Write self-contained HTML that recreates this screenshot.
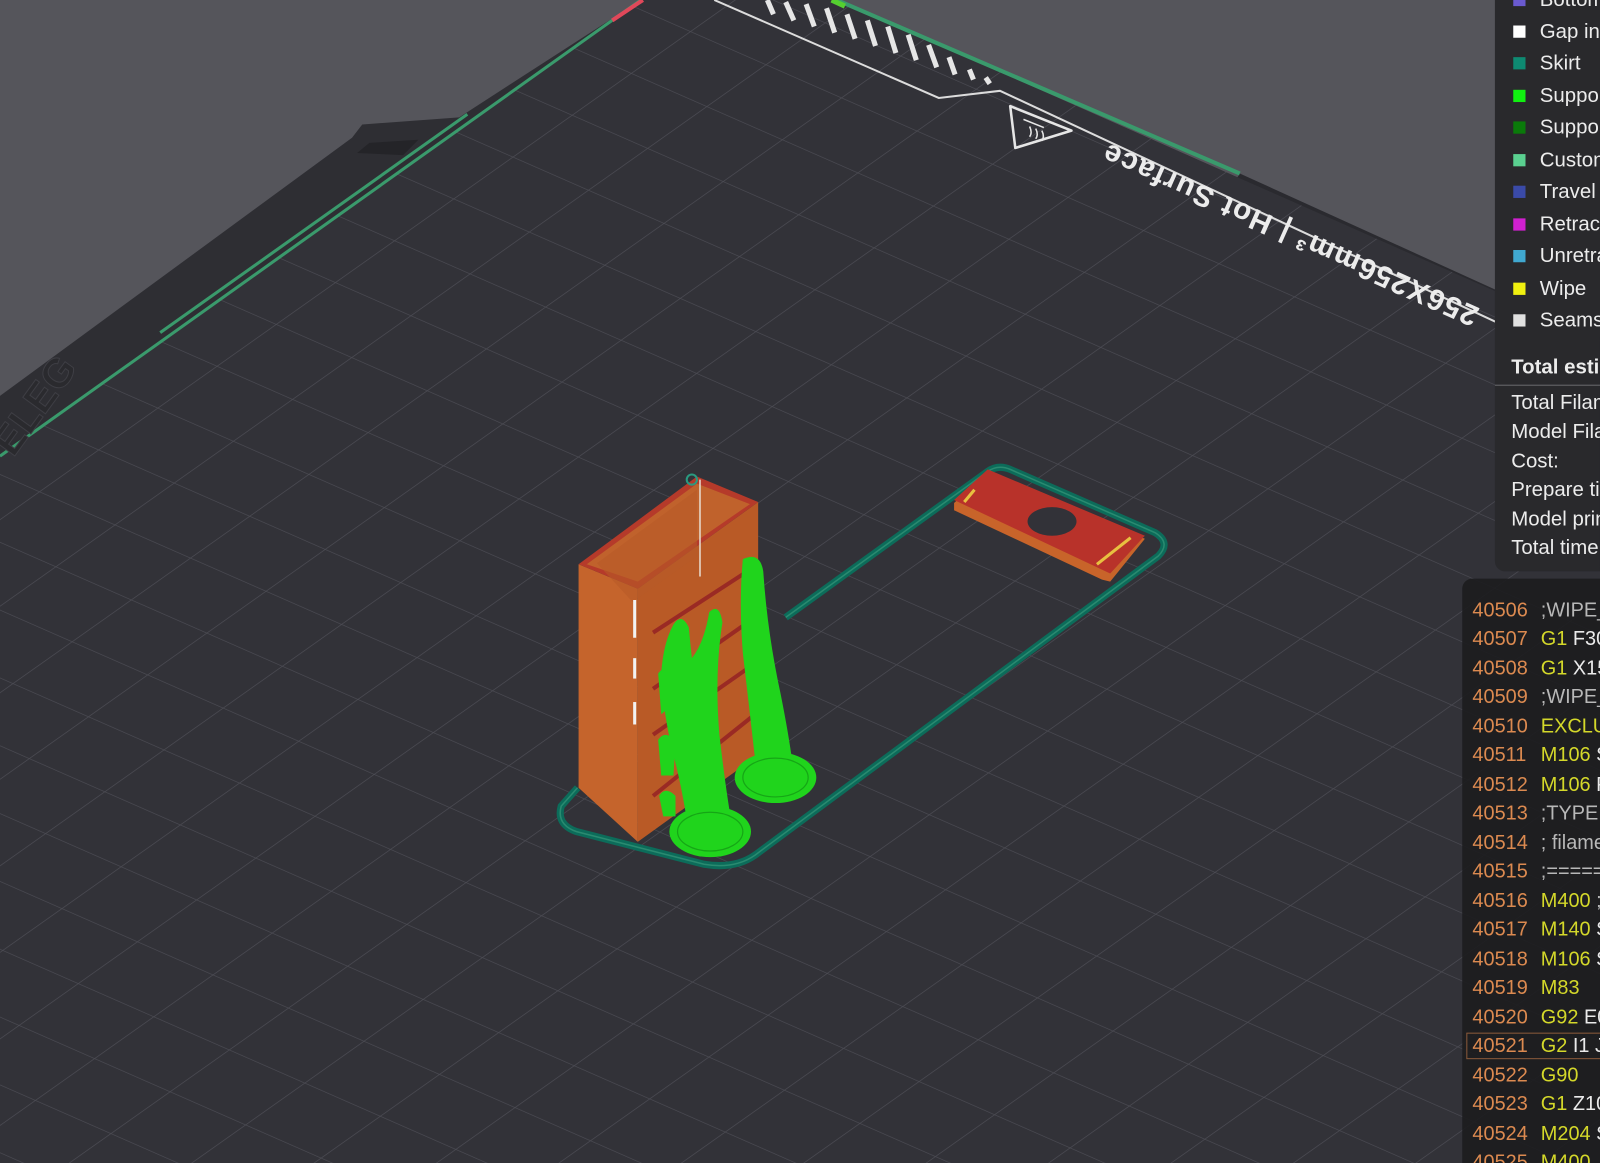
<!DOCTYPE html>
<html><head><meta charset="utf-8"><style>
html,body{margin:0;padding:0;width:1600px;height:1163px;overflow:hidden;background:#323238;font-family:"Liberation Sans",sans-serif}
#w{position:absolute;left:0;top:0;width:1568px;height:1140px;transform:scale(1.0204);transform-origin:0 0;background:#55555b;overflow:hidden}
svg{position:absolute;left:0;top:0}
.leg{position:absolute;left:1465px;top:-20px;width:150px;height:580px;background:#29292c;border-radius:0 0 0 10px;color:#ececec;font-size:20px}
.it{position:absolute;left:18px;height:24px;line-height:24px}
.it i{position:absolute;left:0;top:6px;width:12px;height:12px}
.it span{position:absolute;left:26px;white-space:nowrap}
.st{position:absolute;left:16px;white-space:nowrap;font-size:20px}
.gc{position:absolute;left:1433px;top:567px;width:180px;height:620px;background:rgba(28,28,30,0.9);border-radius:10px 0 0 0;font-size:19.5px;white-space:nowrap}
.ln{position:absolute;left:10px;height:26px;line-height:26px}
.n{color:#dc8a50;display:inline-block;width:67px}
.y{color:#d4d82a}.w{color:#eaeaea}.c{color:#b8b8b8}
</style></head><body><div id="w">
<svg width="1568" height="1140" viewBox="0 0 1568 1140">
<defs>
<pattern id="g" width="100" height="100" patternUnits="userSpaceOnUse" patternTransform="matrix(0.74,0.325,0.58,-0.41,0,0)">
<rect width="100" height="100" fill="#323238"/>
<path d="M0 0H100M0 0V100" stroke="#4c4c54" stroke-width="2" fill="none"/>
</pattern>
<clipPath id="bed"><polygon points="0,447 628,0 820,0 1600,345 1600,1163 0,1163"/></clipPath>
</defs>
<polygon points="0,388 345,135 355,122 450,115 628,0 820,0 1600,345 1600,1163 0,1163" fill="#2e2e33"/>
<polygon points="1215,170 1600,345 1600,360 1210,178" fill="#2a2a2f"/>
<rect width="1600" height="1163" fill="url(#g)" clip-path="url(#bed)"/>
<path d="M350 150 L362 140 L410 137 L395 152 Z" fill="#242428"/>
<line x1="0" y1="447" x2="628" y2="0" stroke="#3a9a6c" stroke-width="3"/>
<line x1="157" y1="326" x2="458" y2="112" stroke="#3a9a6c" stroke-width="3"/>
<line x1="600" y1="20" x2="630" y2="0" stroke="#e0485a" stroke-width="4"/>
<line x1="820" y1="0" x2="1215" y2="170" stroke="#3a9a6c" stroke-width="4"/>
<line x1="815" y1="0" x2="828" y2="6" stroke="#55d030" stroke-width="5"/>
<polyline points="700,0 920,96 980,89 1600,378" fill="none" stroke="#dcdcdc" stroke-width="2"/>
<g stroke="#e6e6e6" stroke-width="5">
<line x1="752" y1="0" x2="758" y2="14"/><line x1="770" y1="2" x2="778" y2="20"/><line x1="790" y1="4" x2="798" y2="26"/>
<line x1="810" y1="8" x2="818" y2="32"/><line x1="830" y1="14" x2="838" y2="38"/><line x1="850" y1="20" x2="858" y2="45"/>
<line x1="870" y1="26" x2="878" y2="52"/><line x1="890" y1="34" x2="898" y2="59"/><line x1="910" y1="44" x2="918" y2="66"/>
<line x1="930" y1="56" x2="936" y2="73"/><line x1="950" y1="68" x2="954" y2="78"/><line x1="966" y1="76" x2="970" y2="82"/>
</g>
<path d="M990 104 L1050 128 L995 145 Z" fill="none" stroke="#e6e6e6" stroke-width="2.5" stroke-linejoin="round"/>
<path d="M1003 117 l20 8 M1009 124 q3 6 0 10 M1015 126 q3 6 0 10 M1021 128 q3 6 0 10" fill="none" stroke="#e6e6e6" stroke-width="1.5"/>
<text x="1265" y="228" transform="rotate(204 1265 228)" text-anchor="middle" dominant-baseline="middle" font-family="Liberation Sans,sans-serif" font-weight="bold" font-size="29" fill="#ececec" letter-spacing="1.5">256X256mm³ | Hot Surface</text>
<text x="45" y="405" transform="rotate(-54 45 405)" text-anchor="middle" font-family="Liberation Sans,sans-serif" font-weight="bold" font-size="40" fill="#2a2a2e" stroke="#3e3e44" stroke-width="1">ELEG</text>
<path d="M770 605 L968 462 Q978 455 990 460 L1132 522 Q1148 532 1135 545 L740 838 Q720 852 690 847 L565 815 Q545 808 550 790 L566 772" fill="none" stroke="#0c6c5a" stroke-width="7"/>
<path d="M770 605 L968 462 Q978 455 990 460 L1132 522 Q1148 532 1135 545 L740 838 Q720 852 690 847 L565 815 Q545 808 550 790 L566 772" fill="none" stroke="#2a8a70" stroke-width="1.5"/>
<polygon points="935,493 968,463 1122,528 1088,570 1080,568 935,500" fill="#c8642a"/>
<polygon points="935,490 968,460 1122,525 1088,562" fill="#b8322a"/>
<ellipse cx="1031" cy="511" rx="24" ry="14" fill="#323238"/>
<line x1="945" y1="492" x2="955" y2="480" stroke="#e8c040" stroke-width="3"/>
<line x1="1075" y1="553" x2="1108" y2="527" stroke="#e8c040" stroke-width="3"/>
<polygon points="567,553 625,577 625,825 567,772" fill="#c5642c"/>
<polygon points="625,577 743,492 743,740 625,825" fill="#b95a26"/>
<polygon points="567,553 683,467 743,492 625,577" fill="#b53a2a"/>
<polygon points="575,553 683,474 735,494 625,570" fill="#c0622c"/>
<polygon points="585,552 683,480 683,545 620,590" fill="#b85a28" opacity="0.6"/>
<line x1="686" y1="470" x2="686" y2="565" stroke="#e8dcd0" stroke-width="1.5"/>
<circle cx="678" cy="470" r="5" fill="none" stroke="#2a9a80" stroke-width="2"/>
<g stroke="#f2f2f2" stroke-width="3"><line x1="622" y1="588" x2="622" y2="625"/><line x1="622" y1="645" x2="622" y2="665"/><line x1="622" y1="688" x2="622" y2="710"/></g>
<g stroke="#9a2a24" stroke-width="4"><line x1="640" y1="620" x2="740" y2="555"/><line x1="640" y1="675" x2="740" y2="605"/><line x1="640" y1="720" x2="740" y2="650"/><line x1="640" y1="780" x2="740" y2="700"/></g>
<g fill="#20d41c">
<ellipse cx="760" cy="762" rx="40" ry="25"/>
<ellipse cx="696" cy="815" rx="40" ry="25"/>
<path d="M728 548 Q745 540 748 560 Q752 620 765 680 Q775 730 778 760 L742 762 Q735 700 728 640 Q724 590 728 548Z"/>
<path d="M660 612 Q668 600 675 615 L678 645 Q690 630 695 600 Q705 590 708 610 Q700 660 705 720 Q712 780 718 812 L675 815 Q668 770 660 740 Q650 700 648 660 Q650 630 660 612Z"/>
<path d="M645 660 Q652 650 660 662 L660 690 L648 700Z M645 725 Q652 715 662 726 L660 760 L648 760Z M646 780 Q652 770 662 780 L662 800 L650 800Z"/>
</g>
<g fill="none" stroke="#16a616" stroke-width="1.2"><ellipse cx="760" cy="762" rx="32" ry="19"/><ellipse cx="696" cy="815" rx="32" ry="19"/></g>
</svg>

<div class="leg">
<div class="it" style="top:8px"><i style="background:#6a5ad0"></i><span>Bottom</span></div>
<div class="it" style="top:39px"><i style="background:#fff"></i><span>Gap infill</span></div>
<div class="it" style="top:70px"><i style="background:#0e8a72"></i><span>Skirt</span></div>
<div class="it" style="top:102px"><i style="background:#10f010"></i><span>Support</span></div>
<div class="it" style="top:133px"><i style="background:#0a7a0a"></i><span>Support</span></div>
<div class="it" style="top:165px"><i style="background:#5ad090"></i><span>Custom</span></div>
<div class="it" style="top:196px"><i style="background:#3a4aa8"></i><span>Travel</span></div>
<div class="it" style="top:228px"><i style="background:#d020d0"></i><span>Retract</span></div>
<div class="it" style="top:259px"><i style="background:#40a8d0"></i><span>Unretract</span></div>
<div class="it" style="top:291px"><i style="background:#f0f010"></i><span>Wipe</span></div>
<div class="it" style="top:322px"><i style="background:#e0e0e0"></i><span>Seams</span></div>
<div class="st" style="top:369px;font-weight:bold">Total estimation</div>
<div style="position:absolute;left:0;top:397px;width:150px;height:1px;background:#6a6a6e"></div>
<div class="st" style="top:404px">Total Filament</div>
<div class="st" style="top:432px">Model Filament</div>
<div class="st" style="top:461px">Cost:</div>
<div class="st" style="top:489px">Prepare time</div>
<div class="st" style="top:518px">Model printing</div>
<div class="st" style="top:546px">Total time</div>
</div>

<div class="gc">
<div class="ln" style="top:18px"><span class="n">40506</span><span class="c">;WIPE_END</span></div>
<div class="ln" style="top:46px"><span class="n">40507</span><span class="y">G1</span> <span class="w">F3000</span></div>
<div class="ln" style="top:75px"><span class="n">40508</span><span class="y">G1</span> <span class="w">X150</span></div>
<div class="ln" style="top:103px"><span class="n">40509</span><span class="c">;WIPE_END</span></div>
<div class="ln" style="top:132px"><span class="n">40510</span><span class="y">EXCLUDE</span></div>
<div class="ln" style="top:160px"><span class="n">40511</span><span class="y">M106</span> <span class="w">S0</span></div>
<div class="ln" style="top:189px"><span class="n">40512</span><span class="y">M106</span> <span class="w">P2</span></div>
<div class="ln" style="top:217px"><span class="n">40513</span><span class="c">;TYPE:Custom</span></div>
<div class="ln" style="top:246px"><span class="n">40514</span><span class="c">; filament</span></div>
<div class="ln" style="top:274px"><span class="n">40515</span><span class="c">;========</span></div>
<div class="ln" style="top:303px"><span class="n">40516</span><span class="y">M400</span> <span class="c">;</span></div>
<div class="ln" style="top:331px"><span class="n">40517</span><span class="y">M140</span> <span class="w">S0</span></div>
<div class="ln" style="top:360px"><span class="n">40518</span><span class="y">M106</span> <span class="w">S0</span></div>
<div class="ln" style="top:388px"><span class="n">40519</span><span class="y">M83</span></div>
<div class="ln" style="top:417px"><span class="n">40520</span><span class="y">G92</span> <span class="w">E0</span></div>
<div style="position:absolute;left:4px;top:445px;width:200px;height:26px;border:1px solid #8a5a3a;box-sizing:border-box"></div>
<div class="ln" style="top:445px"><span class="n">40521</span><span class="y">G2</span> <span class="w">I1 J0</span></div>
<div class="ln" style="top:474px"><span class="n">40522</span><span class="y">G90</span></div>
<div class="ln" style="top:502px"><span class="n">40523</span><span class="y">G1</span> <span class="w">Z10</span></div>
<div class="ln" style="top:531px"><span class="n">40524</span><span class="y">M204</span> <span class="w">S</span></div>
<div class="ln" style="top:559px"><span class="n">40525</span><span class="y">M400</span></div>
</div>
</div></body></html>
